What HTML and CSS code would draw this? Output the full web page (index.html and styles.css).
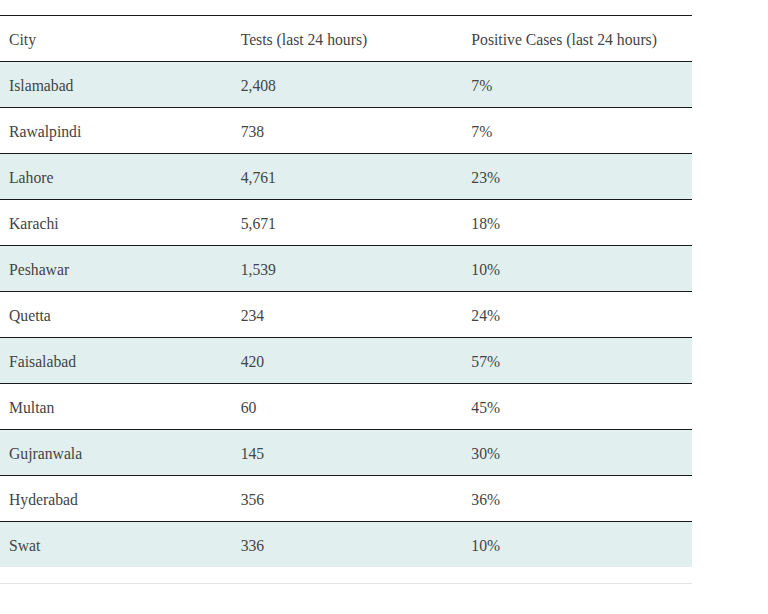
FILE: index.html
```html
<!DOCTYPE html>
<html>
<head>
<meta charset="utf-8">
<link rel="stylesheet" href="styles.css">
</head>
<body>
<div class="wrap">
  <table class="data">
    <thead>
      <tr><th>City</th><th>Tests (last 24 hours)</th><th>Positive Cases (last 24 hours)</th></tr>
    </thead>
    <tbody>
      <tr><td>Islamabad</td><td>2,408</td><td>7%</td></tr>
      <tr><td>Rawalpindi</td><td>738</td><td>7%</td></tr>
      <tr><td>Lahore</td><td>4,761</td><td>23%</td></tr>
      <tr><td>Karachi</td><td>5,671</td><td>18%</td></tr>
      <tr><td>Peshawar</td><td>1,539</td><td>10%</td></tr>
      <tr><td>Quetta</td><td>234</td><td>24%</td></tr>
      <tr><td>Faisalabad</td><td>420</td><td>57%</td></tr>
      <tr><td>Multan</td><td>60</td><td>45%</td></tr>
      <tr><td>Gujranwala</td><td>145</td><td>30%</td></tr>
      <tr><td>Hyderabad</td><td>356</td><td>36%</td></tr>
      <tr><td>Swat</td><td>336</td><td>10%</td></tr>
    </tbody>
  </table>
  <div class="rule"></div>
</div>
</body>
</html>
```

FILE: styles.css
```css
html, body {
  margin: 0;
  padding: 0;
  background: #fff;
}
.wrap {
  width: 692px;
  padding-top: 15px;
}
.data {
  width: 100%;
  border-collapse: collapse;
  table-layout: fixed;
  font-family: "Liberation Serif", "DejaVu Serif", serif;
  font-size: 15.7px;
  color: #444;
}
.data th, .data td {
  height: 43px;
  padding: 2px 9px 0 10px;
  text-align: left;
  font-weight: normal;
  vertical-align: middle;
  border-top: 1px solid #1a1a1a;
}
.data th:first-child, .data td:first-child {
  padding-left: 9px;
}
.data tbody tr:nth-child(odd) {
  background: #e1f0ef;
}
.rule {
  margin-top: 16px;
  height: 1px;
  background: #e2e2e2;
}
```
